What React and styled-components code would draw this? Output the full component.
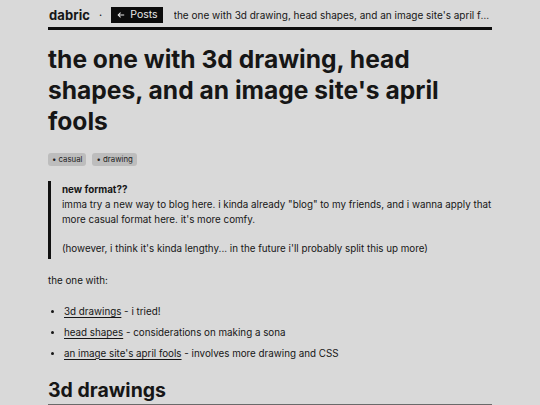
import React from "react";
import styled, { createGlobalStyle } from "styled-components";

const Global = createGlobalStyle`
  html, body { margin: 0; padding: 0; background: #d9d9d9; }
  body { font-family: Inter, "Noto Sans", sans-serif; color: #161616; }
  * { box-sizing: border-box; }
`;

const Page = styled.div`
  width: 444px;
  margin: 0 auto;
  padding-top: 5px;
`;

const Header = styled.header`
  display: flex;
  align-items: center;
  height: 25px;
  border-bottom: 3px solid #0e0e0e;
  padding-bottom: 3px;
  white-space: nowrap;
  overflow: hidden;
`;

const Brand = styled.span`
  font-weight: 700;
  font-size: 13px;
  margin-left: 1px;
  letter-spacing: 0.1px;
`;

const Dot = styled.span`
  font-size: 11px;
  margin: 0 9px 0 9px;
`;

const PostsButton = styled.a`
  display: inline-flex;
  align-items: center;
  gap: 5px;
  background: #0c0c0c;
  color: #e8e8e8;
  font-size: 10.5px;
  height: 16px;
  padding: 0 5px 0 6px;
  text-decoration: none;
`;

const Crumb = styled.span`
  font-size: 10px;
  margin-left: 11px;
  overflow: hidden;
  text-overflow: ellipsis;
  flex: 1;
  min-width: 0;
`;

const Title = styled.h1`
  font-size: 24.6px;
  line-height: 31px;
  font-weight: 700;
  margin: 14px 0 16px;
`;

const Tags = styled.div`
  display: flex;
  gap: 6px;
`;

const Tag = styled.span`
  font-size: 7.8px;
  background: #bdbdbd;
  color: #222;
  border-radius: 3px;
  padding: 2px 4px 2px 4px;
  line-height: 8.5px;
`;

const Quote = styled.blockquote`
  margin: 15px 0 0;
  padding: 1px 0 2px 11px;
  border-left: 3px solid #111;
`;

const Para = styled.p`
  margin: ${(p) => p.$m || "0"};
  font-size: 9.8px;
  line-height: 15.3px;
`;

const Bold = styled.strong`
  font-weight: 700;
`;

const List = styled.ul`
  margin: 16px 0 0;
  padding-left: 16px;
  font-size: 9.8px;
  line-height: 15px;
  li { margin-bottom: 5.8px; }
  li::marker { font-size: 9px; }
`;

const Link = styled.a`
  color: #161616;
  text-decoration: underline;
  text-underline-offset: 2px;
  text-decoration-thickness: 1px;
`;

const H2 = styled.h2`
  font-size: 19.5px;
  font-weight: 700;
  margin: 17px 0 0;
  padding-bottom: 1px;
  line-height: 25px;
  border-bottom: 1px solid #6a6a6a;
`;

export default function App() {
  return (
    <>
      <Global />
      <Page>
        <Header>
          <Brand>dabric</Brand>
          <Dot>·</Dot>
          <PostsButton href="#">
            <svg width="8" height="8" viewBox="0 0 10 10" fill="none" stroke="#e8e8e8" strokeWidth="1.3">
              <path d="M9 5H1.5M4.5 2L1.5 5l3 3" />
            </svg>
            Posts
          </PostsButton>
          <Crumb>the one with 3d drawing, head shapes, and an image site's april fools</Crumb>
        </Header>
        <Title>the one with 3d drawing, head shapes, and an image site's april fools</Title>
        <Tags>
          <Tag>• casual</Tag>
          <Tag>• drawing</Tag>
        </Tags>
        <Quote>
          <Para><Bold>new format??</Bold></Para>
          <Para>imma try a new way to blog here. i kinda already "blog" to my friends, and i wanna apply that more casual format here. it's more comfy.</Para>
          <Para $m="14px 0 0">(however, i think it's kinda lengthy... in the future i'll probably split this up more)</Para>
        </Quote>
        <Para $m="14px 0 0">the one with:</Para>
        <List>
          <li><Link href="#">3d drawings</Link> - i tried!</li>
          <li><Link href="#">head shapes</Link> - considerations on making a sona</li>
          <li><Link href="#">an image site's april fools</Link> - involves more drawing and CSS</li>
        </List>
        <H2>3d drawings</H2>
      </Page>
    </>
  );
}
